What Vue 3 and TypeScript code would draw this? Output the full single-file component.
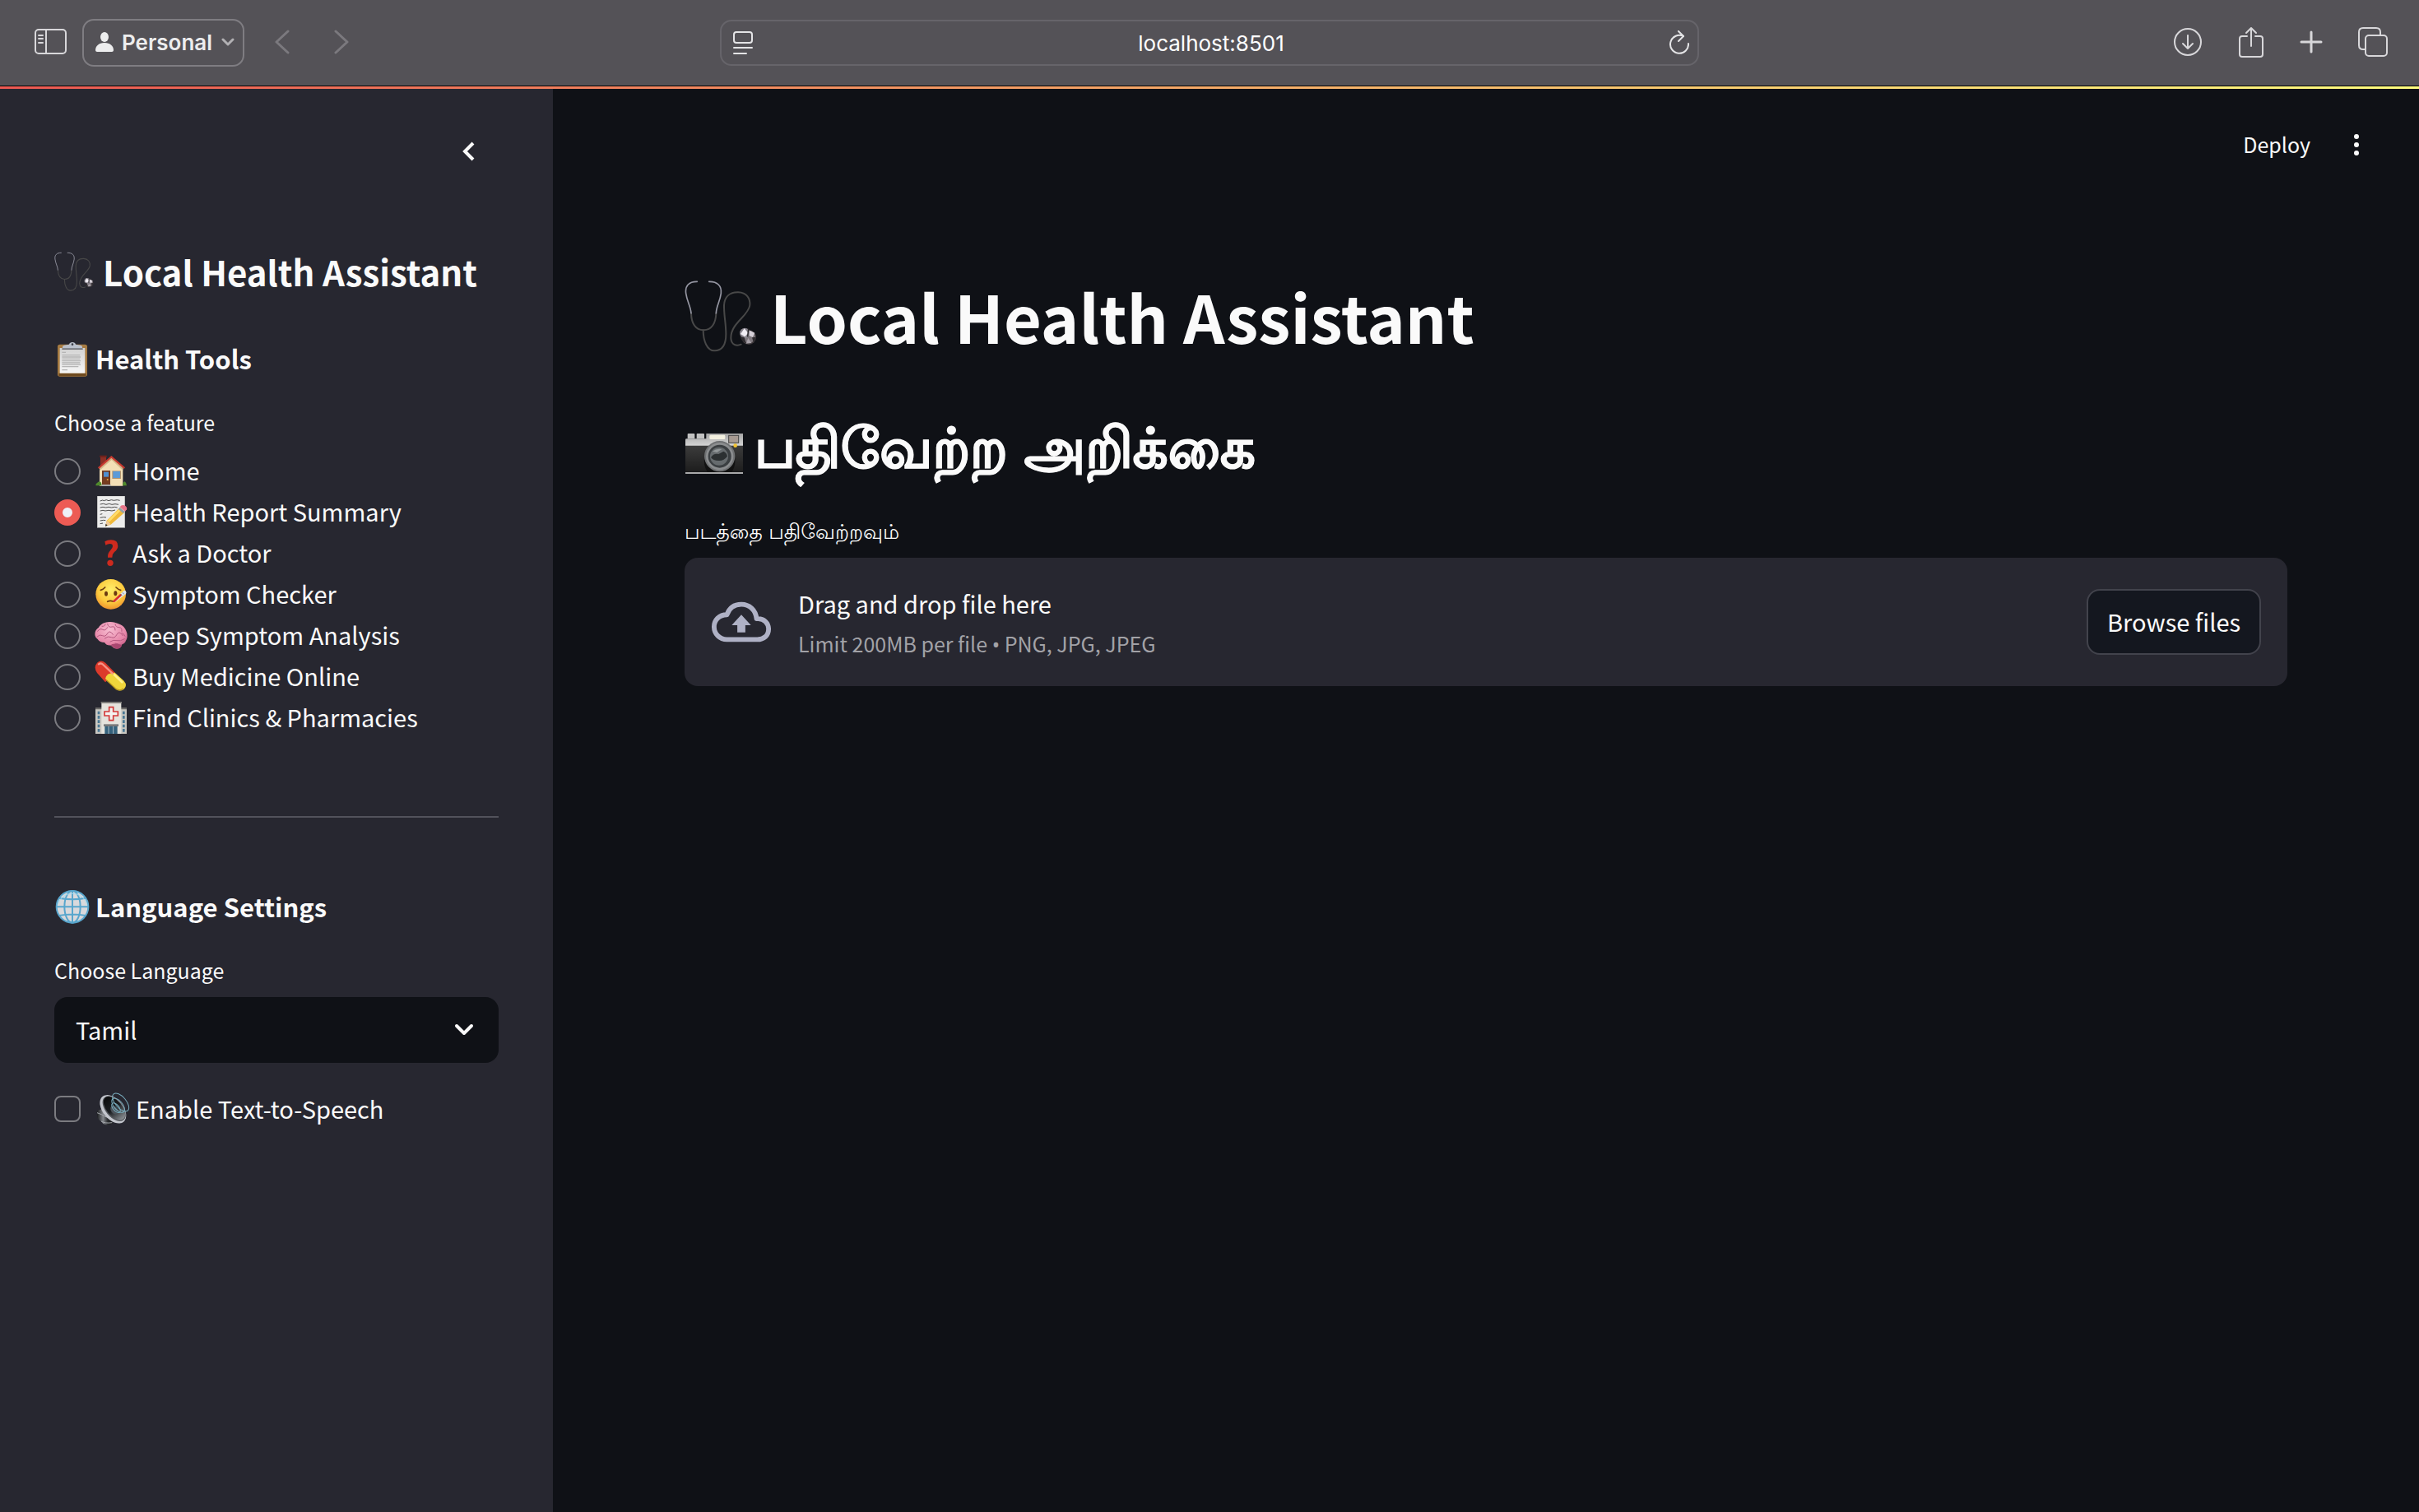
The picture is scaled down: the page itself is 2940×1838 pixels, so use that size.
<script setup lang="ts">
import { ref } from 'vue'

interface Feature {
  id: string
  label: string
}

const features: Feature[] = [
  { id: 'home', label: 'Home' },
  { id: 'report', label: 'Health Report Summary' },
  { id: 'doctor', label: 'Ask a Doctor' },
  { id: 'symptom', label: 'Symptom Checker' },
  { id: 'deep', label: 'Deep Symptom Analysis' },
  { id: 'medicine', label: 'Buy Medicine Online' },
  { id: 'clinics', label: 'Find Clinics & Pharmacies' },
]

const languages: string[] = ['Tamil', 'English', 'Hindi']

const feature = ref<string>('report')
const language = ref<string>('Tamil')
const speech = ref<boolean>(false)
const address = ref<string>('localhost:8501')
</script>

<template>
  <div class="window">
    <svg class="defs" width="0" height="0" aria-hidden="true">
      <defs>
        <linearGradient id="g-paper" x1="0" y1="0" x2="0" y2="1">
          <stop offset="0" stop-color="#d2d2d2" />
          <stop offset="1" stop-color="#f7f7f7" />
        </linearGradient>
        <linearGradient id="g-dark" x1="0" y1="0" x2="0" y2="1">
          <stop offset="0" stop-color="#3c3c3c" />
          <stop offset="1" stop-color="#1d1d1d" />
        </linearGradient>
        <linearGradient id="g-plate" x1="0" y1="0" x2="0" y2="1">
          <stop offset="0" stop-color="#a5a5a5" />
          <stop offset="1" stop-color="#d6d6d6" />
        </linearGradient>
        <linearGradient id="g-magnet" x1="0" y1="0" x2="1" y2="0">
          <stop offset="0" stop-color="#16181a" />
          <stop offset="0.35" stop-color="#84878c" />
          <stop offset="0.6" stop-color="#2a2c2f" />
          <stop offset="1" stop-color="#0c0d0e" />
        </linearGradient>
        <radialGradient id="g-face" cx="0.5" cy="0.35" r="0.65">
          <stop offset="0" stop-color="#ffee6a" />
          <stop offset="0.65" stop-color="#fcca3e" />
          <stop offset="1" stop-color="#ef952f" />
        </radialGradient>
        <radialGradient id="g-brain" cx="0.45" cy="0.3" r="0.75">
          <stop offset="0" stop-color="#f7bcd0" />
          <stop offset="0.7" stop-color="#e583a6" />
          <stop offset="1" stop-color="#b9527c" />
        </radialGradient>
        <linearGradient id="g-cone" x1="0" y1="0" x2="1" y2="0">
          <stop offset="0" stop-color="#0b0c0d" />
          <stop offset="0.5" stop-color="#1c1f22" />
          <stop offset="1" stop-color="#8b9095" />
        </linearGradient>
        <symbol id="stethoscope" viewBox="66 92 264 264">
          <g fill="none" stroke-linecap="round">
            <g stroke="#484848" stroke-width="6">
              <path d="M90 214C91 250 105 274 135 276C165 276 180 250 181 214" />
              <path d="M134 276C134 315 148 351 175 351C205 351 217 325 217 290C217 250 209 220 210 185C212 155 230 137 262 138C292 139 306 160 304 185C299 225 234 250 235 305C236 330 255 335 272 328" />
            </g>
            <g stroke="#9697a3" stroke-width="5">
              <path d="M112 99C82 98 67 115 71 142C75 172 88 188 90 214" />
              <path d="M155 99C186 98 202 115 199 142C195 172 182 188 181 214" />
            </g>
          </g>
          <circle cx="300" cy="302" r="27" fill="#3d383b" />
          <circle cx="301" cy="300" r="23" fill="#7d777d" />
          <circle cx="286" cy="287" r="19" fill="#86828b" />
          <path d="M284 270l14 16-12 14-16-10z" fill="#f1eef5" />
          <path d="M303 277l19 9-8 16-12-6z" fill="#d5d0d8" />
          <path d="M298 305l12 18-20 2z" fill="#a9a3ab" />
          <path d="M268 299l16 4 6 20q-16-6-22-24z" fill="#2d2a2e" />
          <path d="M312 303l14-2q-1 12-9 18z" fill="#2d2a2e" />
          <path d="M299 270l-3 30" stroke="#252326" stroke-width="4" />
        </symbol>
        <symbol id="camera" viewBox="66 618 216 216">
          <path d="M77 670v-17q0-2 3-2h20q3 0 3 2v17zM110 670v-17q0-2 3-2h22q3 0 3 2v17z" fill="#c2c2c2" />
          <path d="M69 674q0-4 4-4h72v-19h134v46H69z" fill="url(#g-plate)" />
          <path d="M69 695h210v96H69z" fill="url(#g-dark)" />
          <path d="M69 791h210v3H69z" fill="#171717" />
          <path d="M69 793h210v4H69z" fill="#dcdcdc" />
          <rect x="157" y="656" width="57" height="16" rx="4" fill="#f3f0e0" />
          <rect x="227" y="658" width="36" height="27" fill="#a69a92" stroke="#454545" stroke-width="3" />
          <path d="M139 735q-6 30 10 56h90q15-25 10-56z" fill="#111" />
          <circle cx="194" cy="734" r="56" fill="#6f7173" />
          <circle cx="194" cy="734" r="50" fill="#8b8d8f" />
          <circle cx="194" cy="734" r="42" fill="#3b3f42" />
          <circle cx="192" cy="734" r="33" fill="#666b6e" />
          <path d="M162 738q10-16 28-12l18-10q12 4 14 18-14 18-32 16-20 0-28-12z" fill="#2c3032" />
          <path d="M168 716q14-12 34-8l-18 12z" fill="#929799" />
          <circle cx="251" cy="695" r="7" fill="#f1c232" />
        </symbol>
        <symbol id="clipboard" viewBox="0 3 132 132">
          <rect x="12" y="17" width="108" height="117" rx="8" fill="#a67b42" />
          <path d="M16 122h100v8q0 3-3 3H19q-3 0-3-3z" fill="#6f4b20" />
          <path d="M20 30h92v92H20z" fill="url(#g-paper)" />
          <g stroke="#b5b5b5" stroke-width="4">
            <path d="M28 46h14M28 56h66M28 63h68M28 70h66M28 77h68M28 84h66M28 91h68M28 98h60M28 110h20" />
          </g>
          <path d="M30 34V26q0-5 6-6l18-3q2-8 12-8t12 8l18 3q6 1 6 6v8z" fill="#b9c0cc" />
          <path d="M28 31h76v5H28z" fill="#6d6f75" />
          <circle cx="66" cy="17" r="4" fill="#3a3c46" />
        </symbol>
        <symbol id="globe" viewBox="0 3 132 132">
          <circle cx="66" cy="70" r="59" fill="#d9d9dc" />
          <g fill="none" stroke="#58a6cd" stroke-width="6">
            <circle cx="66" cy="70" r="58" />
            <ellipse cx="66" cy="70" rx="29" ry="58" />
            <path d="M66 12v116M8 70h116M17 38q49 9 98 0M17 102q49-9 98 0" />
          </g>
          <path d="M13 62a54 50 0 0 1 106 0" fill="none" stroke="#a5dcf0" stroke-width="3" />
        </symbol>
        <symbol id="home" viewBox="225 39 120 120">
          <path d="M246 43h21v26l-21 20z" fill="#8c2f25" />
          <path d="M244 41h25v7h-25z" fill="#70221c" />
          <path d="M243 88l44-43 41 43v64h-85z" fill="#f3dfb6" />
          <path d="M243 88l44-43 41 43v8l-41-39-44 39z" fill="#d4b98a" />
          <path d="M237 85l49-43 50 43-4 5-46-40-45 40z" fill="#c93a30" />
          <path d="M252 96h30v51h-30z" fill="#753c20" />
          <path d="M258 101h18v18h-18z" fill="#4f8fd0" />
          <circle cx="272" cy="129" r="3" fill="#e1a63a" />
          <path d="M289 97h32v29h-32z" fill="#b3936d" />
          <path d="M292 99h26v24h-26z" fill="#5c9bd8" />
          <path d="M250 147h34v6h-34z" fill="#a9a9a9" />
          <path d="M229 151q-1-8 6-11 8-9 14 0 2 6 1 11zM327 151q0-12 8-15 7 5 7 15z" fill="#4f8a2c" />
        </symbol>
        <symbol id="report" viewBox="225 189 120 120">
          <path d="M234 188h102v117H234z" fill="#a9a9a9" />
          <path d="M236 190h98v113h-98z" fill="#ececec" />
          <path d="M245 207l9-3 5 2 9-3 8 3 10-3 9 2 12-2 10 2M245 219l12-2 10 3 11-3 10 3 12-2 12 2M245 231l10-2 11 2 10-2 10 2 12-2 10 2M245 243l10-2 9 2 12-2 12 2 12-3M245 256l8-2M245 268l12-2 10 1M245 279l12-2 8 1M245 290l10-2" fill="none" stroke="#4d4d4d" stroke-width="3" />
          <path d="M264 299l5-20 47-47 18 17-50 44z" fill="#f0b93a" />
          <path d="M272 278l47-46 6 5-47 47z" fill="#ffdc6a" />
          <path d="M264 299l6-21 14 14z" fill="#efc99b" />
          <path d="M264 299l2-9 6 6z" fill="#1f1f1f" />
          <path d="M311 236l6-6 18 16-6 6z" fill="#98a0a8" />
          <path d="M317 229q6-9 16-6 12 6 9 15l-6 7z" fill="#e8758a" />
        </symbol>
        <symbol id="doctor" viewBox="225 339 120 120">
          <path d="M262 355q9-6 23-6 25 0 25 22 0 12-13 22-8 7-8 20h-16q-1-15 9-25 9-9 9-16 0-9-10-9-8 0-16 5z" fill="#ce2a1e" />
          <circle cx="282" cy="433" r="11" fill="#ce2a1e" />
        </symbol>
        <symbol id="symptom" viewBox="225 9 120 120">
          <circle cx="284" cy="67" r="55" fill="url(#g-face)" />
          <path d="M247 52q9-2 16-10M303 42q8 8 17 10" fill="none" stroke="#6d3d12" stroke-width="5" stroke-linecap="round" />
          <ellipse cx="267" cy="65" rx="6" ry="9" fill="#6b3a10" />
          <ellipse cx="301" cy="64" rx="6" ry="9" fill="#6b3a10" />
          <path d="M272 94q9-5 20-1" fill="none" stroke="#6b3a10" stroke-width="5" stroke-linecap="round" />
          <path d="M293 91l36-35q5-5 10 0 4 6-1 11l-39 29z" fill="#dde6ec" />
          <path d="M296 92l24-22" stroke="#d92f2c" stroke-width="8" stroke-linecap="round" />
          <path d="M321 67l4 5M327 61l5 6" stroke="#7a8890" stroke-width="3" />
        </symbol>
        <symbol id="deep" viewBox="225 159 120 120">
          <path d="M226 213c0-12 6-20 14-25 6-10 18-18 32-19 14-3 30 0 40 6 14 4 24 14 28 26 6 12 5 26-1 35-2 8-8 12-14 14-2 10-10 16-20 16-9 0-15-5-19-13-10 2-20-1-25-10-12 0-20-4-25-12-6-4-10-10-10-18z" fill="url(#g-brain)" />
          <g fill="none" stroke="#b65880" stroke-width="3" stroke-linecap="round">
            <path d="M236 202q8-12 18-6t18-8M252 184q10 2 12-8M272 176q4 14 16 10t12 12M300 176q2 12 14 12t10 14M234 222q10-10 20-4t18-8 20 4M262 228q12-10 24-4t20-10 22 4M282 240q12-8 24-4t28-6M300 246q12 0 18 8M284 254q10 2 16 8M324 208q8 2 12 12" />
          </g>
          <path d="M286 250q20-6 38 2-2 12-14 14-16 0-24-16z" fill="#a94770" />
        </symbol>
        <symbol id="medicine" viewBox="225 309 120 120">
          <path d="M234 317q14-13 30 0l36 37-36 34-30-34q-14-20 0-37z" fill="#dc3a2b" />
          <path d="M299 353l33 30q14 17 0 30-16 12-32-1l-36-37q4-22 35-22z" fill="#efd53b" />
          <path d="M240 322q8-6 16 2l34 32" fill="none" stroke="#f79488" stroke-width="7" stroke-linecap="round" />
          <path d="M297 361l28 27" stroke="#fff08a" stroke-width="8" stroke-linecap="round" />
          <path d="M268 380l36 33q14 8 26-2" fill="none" stroke="#b8961e" stroke-width="4" />
        </symbol>
        <symbol id="clinics" viewBox="225 459 120 120">
          <path d="M228 482h114v94H228z" fill="#c9c7c1" />
          <path d="M228 481h24v6h-24zM320 481h22v6h-22z" fill="#6c6b69" />
          <path d="M250 460h72v116h-72z" fill="#e5e3dd" />
          <path d="M248 459h76v6h-76z" fill="#7d7c7a" />
          <path d="M278 479h15v16h17v15h-17v17h-15v-17h-17v-15h17z" fill="#f4f2f0" stroke="#d33a3a" stroke-width="5" />
          <path d="M236 494h8v11h-8zM236 510h8v11h-8zM236 526h8v11h-8zM236 542h8v11h-8zM236 558h8v11h-8zM327 494h8v11h-8zM327 510h8v11h-8zM327 526h8v11h-8zM327 542h8v11h-8zM327 558h8v11h-8z" fill="#4a7895" />
          <path d="M258 541h54v8h-54z" fill="#77787a" />
          <path d="M262 549h46v27h-46z" fill="#35627d" />
          <path d="M276 549v27M293 549v27" stroke="#a9b9c3" stroke-width="3" />
        </symbol>
        <symbol id="speaker" viewBox="0 0 132 132">
          <path d="M8 78q2-9 12-9l22-8 32 38-8 6v13q-12 9-26 6-10-2-15-11-12-8-15-17z" fill="url(#g-magnet)" />
          <path d="M9 80q18 6 30 14 12 6 26 4M24 111q14 9 40 5" fill="none" stroke="#a5a8ad" stroke-width="3" />
          <ellipse cx="67" cy="67" rx="60" ry="37" transform="rotate(50 67 67)" fill="#c3c6cd" />
          <ellipse cx="71" cy="65" rx="54" ry="31" transform="rotate(50 71 65)" fill="#54575c" />
          <ellipse cx="72" cy="64" rx="51" ry="28" transform="rotate(50 72 64)" fill="url(#g-cone)" />
          <ellipse cx="72" cy="70" rx="17" ry="12" transform="rotate(50 72 70)" fill="#4c545b" />
          <g fill="none" stroke="#79aebf" stroke-width="3">
            <ellipse cx="78" cy="62" rx="21" ry="11" transform="rotate(50 78 62)" />
            <ellipse cx="86" cy="53" rx="31" ry="16" transform="rotate(50 86 53)" />
            <ellipse cx="95" cy="42" rx="40" ry="20" transform="rotate(50 95 42)" />
          </g>
        </symbol>
      </defs>
    </svg>

    <header class="toolbar">
      <div class="tools-left">
        <button class="icon-button panel" type="button" aria-label="Show sidebar">
          <svg width="40" height="32" viewBox="0 0 40 32" fill="none" stroke="currentColor" stroke-width="2">
            <rect x="1" y="1" width="37" height="29" rx="4" />
            <path d="M14 1v29" />
            <path d="M5 8h5M5 12h5M5 17h5" stroke-linecap="round" />
          </svg>
        </button>
        <button class="profile" type="button">
          <svg width="22" height="24" viewBox="0 0 22 24" fill="currentColor" aria-hidden="true">
            <ellipse cx="11" cy="6" rx="5" ry="6" />
            <path d="M0 22c0-5 4-9 11-9s11 4 11 9c0 1-1 2-2 2H2c-1 0-2-1-2-2z" />
          </svg>
          <span>Personal</span>
          <svg class="dim" width="16" height="10" viewBox="0 0 16 10" fill="none" stroke="currentColor" stroke-width="3" stroke-linecap="round" stroke-linejoin="round" aria-hidden="true">
            <path d="M2 2l6 6 6-6" />
          </svg>
        </button>
        <nav class="history" aria-label="History">
          <button class="icon-button" type="button" aria-label="Back">
            <svg width="18" height="30" viewBox="0 0 18 30" fill="none" stroke="currentColor" stroke-width="3" stroke-linecap="round" stroke-linejoin="round">
              <path d="M16 2L2 15l14 13" />
            </svg>
          </button>
          <button class="icon-button" type="button" aria-label="Forward">
            <svg width="18" height="30" viewBox="0 0 18 30" fill="none" stroke="currentColor" stroke-width="3" stroke-linecap="round" stroke-linejoin="round">
              <path d="M2 2l14 13L2 28" />
            </svg>
          </button>
        </nav>
      </div>

      <div class="address">
        <button class="icon-button" type="button" aria-label="Page menu">
          <svg width="24" height="28" viewBox="0 0 24 28" fill="none" stroke="currentColor" stroke-width="2" stroke-linecap="round">
            <rect x="1" y="1" width="22" height="13" rx="3" />
            <path d="M1 20h22M1 27h15" />
          </svg>
        </button>
        <input v-model="address" type="text" aria-label="Address" />
        <button class="icon-button" type="button" aria-label="Reload">
          <svg width="24" height="30" viewBox="0 0 24 30" fill="none" stroke="currentColor" stroke-width="2" stroke-linecap="round" stroke-linejoin="round">
            <path d="M17 7a11 11 0 1 0 6 9" />
            <path d="M11 1l6 6-6 6" />
          </svg>
        </button>
      </div>

      <div class="tools-right">
        <button class="icon-button" type="button" aria-label="Downloads">
          <svg width="36" height="36" viewBox="0 0 36 36" fill="none" stroke="currentColor" stroke-width="2" stroke-linecap="round" stroke-linejoin="round">
            <circle cx="18" cy="18" r="16" />
            <path d="M18 10v16M12 20l6 6 6-6" />
          </svg>
        </button>
        <button class="icon-button" type="button" aria-label="Share">
          <svg width="32" height="40" viewBox="0 0 32 40" fill="none" stroke="currentColor" stroke-width="2" stroke-linecap="round" stroke-linejoin="round">
            <path d="M11 13H5q-3 0-3 3v19q0 3 3 3h22q3 0 3-3V16q0-3-3-3h-6" />
            <path d="M16 25V3M10 9l6-6 6 6" />
          </svg>
        </button>
        <button class="icon-button" type="button" aria-label="New tab">
          <svg width="28" height="28" viewBox="0 0 28 28" fill="none" stroke="currentColor" stroke-width="3" stroke-linecap="round">
            <path d="M14 2v24M2 14h24" />
          </svg>
        </button>
        <button class="icon-button" type="button" aria-label="Tab overview">
          <svg width="36" height="36" viewBox="0 0 36 36" fill="none" stroke="currentColor" stroke-width="2">
            <rect x="9" y="10" width="26" height="25" rx="4" />
            <path d="M9 27H6q-5 0-5-5V6q0-5 5-5h16q5 0 5 5v4" />
          </svg>
        </button>
      </div>
    </header>
    <div class="decoration"></div>

    <div class="app">
      <aside class="sidebar">
        <div class="collapse">
          <button class="icon-button" type="button" aria-label="Collapse sidebar">
            <svg width="20" height="24" viewBox="0 0 20 24" fill="none" stroke="currentColor" stroke-width="4">
              <path d="M15 2L5 12l10 10" />
            </svg>
          </button>
        </div>

        <h1 class="side-title">
          <svg width="48" height="48" aria-hidden="true"><use href="#stethoscope" /></svg>
          <span>Local Health Assistant</span>
        </h1>

        <h3 class="side-heading">
          <svg width="44" height="44" aria-hidden="true"><use href="#clipboard" /></svg>
          <span>Health Tools</span>
        </h3>

        <fieldset class="features">
          <legend>Choose a feature</legend>
          <label v-for="item in features" :key="item.id" class="feature">
            <input v-model="feature" type="radio" name="feature" :value="item.id" />
            <svg width="40" height="40" aria-hidden="true"><use :href="'#' + item.id" /></svg>
            <span>{{ item.label }}</span>
          </label>
        </fieldset>

        <hr />

        <h3 class="side-heading">
          <svg width="44" height="44" aria-hidden="true"><use href="#globe" /></svg>
          <span>Language Settings</span>
        </h3>

        <label class="field-label" for="language">Choose Language</label>
        <div class="select-box">
          <select id="language" v-model="language">
            <option v-for="name in languages" :key="name" :value="name">{{ name }}</option>
          </select>
          <svg width="24" height="16" viewBox="0 0 24 16" fill="none" stroke="currentColor" stroke-width="4" stroke-linecap="round" stroke-linejoin="round" aria-hidden="true">
            <path d="M3 3l9 9 9-9" />
          </svg>
        </div>

        <label class="speech">
          <input v-model="speech" type="checkbox" />
          <svg width="44" height="44" aria-hidden="true"><use href="#speaker" /></svg>
          <span>Enable Text-to-Speech</span>
        </label>
      </aside>

      <main class="main">
        <div class="actions">
          <button class="deploy" type="button">Deploy</button>
          <button class="icon-button" type="button" aria-label="Main menu">
            <svg width="8" height="28" viewBox="0 0 8 28" fill="currentColor">
              <circle cx="4" cy="4" r="3" />
              <circle cx="4" cy="14" r="3" />
              <circle cx="4" cy="24" r="3" />
            </svg>
          </button>
        </div>

        <div class="content">
          <h1 class="title">
            <svg width="88" height="88" aria-hidden="true"><use href="#stethoscope" /></svg>
            <span>Local Health Assistant</span>
          </h1>

          <h2 class="subtitle" lang="ta">
            <svg width="72" height="72" aria-hidden="true"><use href="#camera" /></svg>
            <span>பதிவேற்ற அறிக்கை</span>
          </h2>

          <label class="upload-label" for="upload" lang="ta">படத்தை பதிவேற்றவும்</label>
          <section class="dropzone">
            <svg class="cloud" width="74" height="52" viewBox="0 0 76 52" fill="none" aria-hidden="true">
              <path d="M20 48h38c8 0 14-5 14-13s-6-13-13-13h-2C56 11 48 4 38 4c-8 0-15 4-18 13C10 17 4 24 4 32c0 9 7 16 16 16z" stroke="currentColor" stroke-width="6" stroke-linejoin="round" />
              <path d="M38 17l12 13h-7v9H33v-9h-7z" fill="currentColor" />
            </svg>
            <div class="drop-text">
              <span class="drop-title">Drag and drop file here</span>
              <small>Limit 200MB per file <span class="bullet">•</span> PNG, JPG, JPEG</small>
            </div>
            <button id="upload" class="browse" type="button">Browse files</button>
          </section>
        </div>
      </main>
    </div>
  </div>
</template>

<style>
body {
  margin: 0;
  background: #0f1116;
}
</style>

<style scoped>
.window {
  display: flex;
  flex-direction: column;
  min-height: 100vh;
  color: #fafafa;
  font-family: "Noto Sans CJK SC", "Noto Sans", sans-serif;
  font-size: 29px;
}

.window * {
  box-sizing: border-box;
}

.defs {
  position: absolute;
}

svg {
  display: block;
  flex: none;
}

button,
input,
select {
  margin: 0;
  font: inherit;
  color: inherit;
}

.icon-button {
  display: flex;
  padding: 0;
  border: 0;
  background: none;
}

/* Browser toolbar */
.toolbar {
  display: grid;
  grid-template-columns: 1fr minmax(0, 1190px) 1fr;
  align-items: center;
  height: 105px;
  padding: 0 38px;
  border-bottom: 1px solid #000;
  background: #545257;
  color: #d8d7da;
  font-family: Inter, "Liberation Sans", sans-serif;
}

.tools-left,
.tools-right,
.history {
  display: flex;
  align-items: center;
}

.tools-left {
  padding-left: 4px;
}

.tools-left .icon-button,
.tools-right .icon-button {
  margin-bottom: 2px;
}

.panel {
  margin-right: 18px;
}

.profile {
  display: flex;
  align-items: center;
  width: 197px;
  height: 58px;
  padding: 0 10px 2px 14px;
  border: 2px solid #7f7d82;
  border-radius: 14px;
  background: none;
  color: #ededee;
  font-size: 26px;
  font-weight: 600;
}

.profile span {
  flex: 1;
  margin-left: 10px;
  text-align: left;
}

.dim {
  color: #b1b0b3;
}

.history {
  gap: 54px;
  margin-left: 37px;
  color: #7b797e;
}

.address {
  display: flex;
  align-items: center;
  height: 56px;
  padding: 0 10px 0 14px;
  border: 2px solid #66646a;
  border-radius: 14px;
  color: #e4e4e6;
}

.address input {
  flex: 1;
  min-width: 0;
  padding: 0;
  border: 0;
  outline: 0;
  background: none;
  color: #fff;
  font-size: 26px;
  text-align: center;
}

.tools-right {
  justify-content: flex-end;
  gap: 43px;
}

.decoration {
  height: 3px;
  background: linear-gradient(90deg, #ec5953, #fffd80);
}

/* Page */
.app {
  display: flex;
  flex: 1;
}

.sidebar {
  flex: none;
  width: 672px;
  padding: 0 66px;
  background: #272730;
}

.collapse {
  display: flex;
  justify-content: flex-end;
  padding: 64px 26px 0 0;
}

.side-title,
.side-heading,
.title,
.subtitle {
  display: flex;
  align-items: center;
  margin: 0;
  font-weight: 700;
  white-space: nowrap;
}

.side-title {
  gap: 11px;
  margin-top: 104px;
  font-size: 42px;
  line-height: 60px;
}

.side-heading {
  gap: 6px;
  margin-top: 53px;
  font-size: 31px;
  line-height: 46px;
}

.features {
  margin: 34px 0 0;
  padding: 0;
  border: 0;
}

.features legend,
.field-label {
  display: block;
  padding: 0;
  font-size: 25px;
  line-height: 40px;
}

.features legend {
  margin-bottom: 15px;
}

.feature,
.speech {
  display: flex;
  align-items: center;
  height: 50px;
  line-height: 46px;
  white-space: nowrap;
}

.feature span {
  margin: 0 0 4px 6px;
}

.feature input,
.speech input {
  flex: none;
  width: 32px;
  height: 32px;
  margin-right: 17px;
  border: 2px solid #7b7b80;
  appearance: none;
}

.feature input {
  border-radius: 50%;
}

.feature input:checked {
  border: 10px solid #ed5b54;
  background: #eef0f6;
}

hr {
  height: 2px;
  margin: 94px 0 0;
  border: 0;
  background: #52525b;
}

hr + .side-heading {
  margin-top: 85px;
}

.field-label {
  margin: 34px 0 13px;
}

.select-box {
  position: relative;
}

.select-box select {
  display: block;
  width: 100%;
  height: 80px;
  padding: 0 72px 2px 26px;
  border: 0;
  border-radius: 16px;
  background: #0f1116;
  appearance: none;
}

.select-box svg {
  position: absolute;
  top: 32px;
  right: 30px;
  pointer-events: none;
}

.speech {
  margin-top: 31px;
}

.speech span {
  margin: 0 0 2px 6px;
}

.speech input {
  border-radius: 8px;
}

.main {
  flex: 1;
  min-width: 0;
  background: #0f1116;
}

.actions {
  display: flex;
  justify-content: flex-end;
  align-items: center;
  gap: 52px;
  padding: 48px 72px 0 0;
}

.deploy {
  padding: 0 0 2px;
  border: 0;
  background: none;
  font-size: 25px;
  line-height: 38px;
}

.content {
  padding: 135px 160px 0;
}

.title {
  gap: 16px;
  font-size: 79px;
  line-height: 106px;
}

.subtitle,
.upload-label {
  font-family: "Lohit Tamil", "Noto Sans Tamil", "Noto Sans", sans-serif;
}

/* The Tamil face has a single weight, so the heading gets a light outline on top of bold. */
.subtitle {
  gap: 13px;
  margin-top: 70px;
  font-size: 67px;
  line-height: 90px;
  -webkit-text-stroke: 1px currentColor;
}

.upload-label {
  display: block;
  margin-top: 32px;
  font-size: 25px;
  line-height: 40px;
}

.dropzone {
  display: flex;
  align-items: center;
  height: 156px;
  margin-top: 9px;
  padding: 0 32px;
  border-radius: 16px;
  background: #272730;
}

.cloud {
  color: #afb1c5;
}

.drop-text {
  display: flex;
  flex: 1;
  flex-direction: column;
  gap: 6px;
  margin-left: 32px;
}

.drop-title {
  line-height: 46px;
}

.drop-text small {
  color: #a2a2a7;
  font-size: 25px;
  line-height: 40px;
}

.bullet {
  font-family: "Noto Sans", sans-serif;
}

.browse {
  width: 212px;
  height: 80px;
  padding: 0 0 3px;
  border: 2px solid #42434c;
  border-radius: 16px;
  background: #14171f;
}
</style>
